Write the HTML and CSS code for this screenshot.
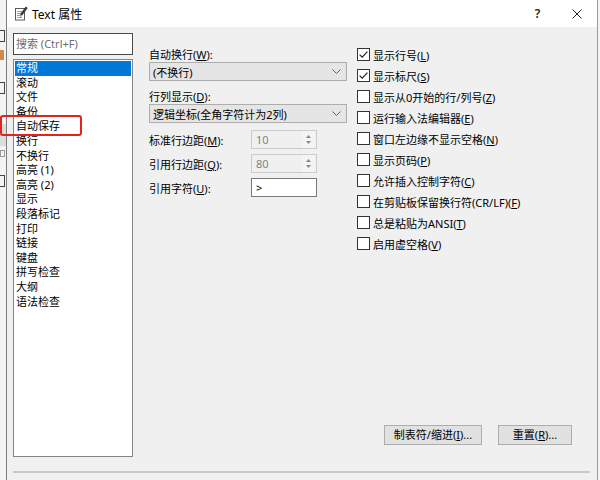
FILE: index.html
```html
<!DOCTYPE html>
<html lang="zh-CN">

<head>
    <meta charset="UTF-8">
    <title>Text 属性</title>
    <link rel="stylesheet" href="styles.css">
</head>

<body>
    <div class="desk">
        <div class="behind">
            <span class="peek g1"></span>
            <span class="peek pen"></span>
            <span class="peek g2"></span>
            <span class="peek bar"></span>
            <span class="peek tiny"></span>
            <span class="peek g3"></span>
        </div>

        <div class="window">
            <div class="titlebar">
                <svg class="app-icon" width="14" height="15" viewBox="0 0 14 15">
                    <rect x="1.5" y="2.5" width="9" height="11.5" fill="#fff" stroke="#5a5a5a"/>
                    <path d="M3 5.5h5M3 7.5h5M3 9.5h4M3 11.5h5" stroke="#9a9a9a"/>
                    <path d="M12.8 1.2 L7 9" stroke="#3a3a3a" stroke-width="2.4"/>
                    <path d="M7 9 L5.6 11 L7.9 10.1 Z" fill="#c98a3a"/>
                </svg>
                <span class="title">Text 属性</span>
                <span class="caption-btn help">?</span>
                <span class="caption-btn close">
                    <svg width="10" height="10" viewBox="0 0 10 10">
                        <path d="M0.5 0.5 L9.5 9.5 M9.5 0.5 L0.5 9.5" stroke="#222" stroke-width="1"/>
                    </svg>
                </span>
            </div>

            <div class="client">
                <div class="nav">
                    <div class="search">搜索 (Ctrl+F)</div>
                    <div class="list">
                        <div class="item selected">常规</div>
                        <div class="item">滚动</div>
                        <div class="item">文件</div>
                        <div class="item">备份</div>
                        <div class="item">自动保存</div>
                        <div class="item">换行</div>
                        <div class="item">不换行</div>
                        <div class="item">高亮 (1)</div>
                        <div class="item">高亮 (2)</div>
                        <div class="item">显示</div>
                        <div class="item">段落标记</div>
                        <div class="item">打印</div>
                        <div class="item">链接</div>
                        <div class="item">键盘</div>
                        <div class="item">拼写检查</div>
                        <div class="item">大纲</div>
                        <div class="item">语法检查</div>
                    </div>
                </div>

                <div class="page">
                    <div class="settings">
                        <div class="col-mid">
                            <div class="caption">自动换行(<u>W</u>):</div>
                            <div class="combo">
                                <span>(不换行)</span>
                                <svg width="9" height="5" viewBox="0 0 9 5"><polyline points="0.5,0.5 4.5,4.5 8.5,0.5" fill="none" stroke="#606060"/></svg>
                            </div>
                            <div class="caption second">行列显示(<u>D</u>):</div>
                            <div class="combo">
                                <span>逻辑坐标(全角字符计为2列)</span>
                                <svg width="9" height="5" viewBox="0 0 9 5"><polyline points="0.5,0.5 4.5,4.5 8.5,0.5" fill="none" stroke="#606060"/></svg>
                            </div>

                            <div class="field-row first">
                                <span class="field-label">标准行边距(<u>M</u>):</span>
                                <div class="spin">
                                    <span class="spin-value">10</span>
                                    <span class="spin-arrows">
                                        <svg width="5" height="3" viewBox="0 0 5 3"><path d="M0 3 L2.5 0 L5 3 Z" fill="#8a8a8a"/></svg>
                                        <svg width="5" height="3" viewBox="0 0 5 3"><path d="M0 0 L2.5 3 L5 0 Z" fill="#8a8a8a"/></svg>
                                    </span>
                                </div>
                            </div>
                            <div class="field-row">
                                <span class="field-label">引用行边距(<u>Q</u>):</span>
                                <div class="spin">
                                    <span class="spin-value">80</span>
                                    <span class="spin-arrows">
                                        <svg width="5" height="3" viewBox="0 0 5 3"><path d="M0 3 L2.5 0 L5 3 Z" fill="#8a8a8a"/></svg>
                                        <svg width="5" height="3" viewBox="0 0 5 3"><path d="M0 0 L2.5 3 L5 0 Z" fill="#8a8a8a"/></svg>
                                    </span>
                                </div>
                            </div>
                            <div class="field-row">
                                <span class="field-label">引用字符(<u>U</u>):</span>
                                <div class="textbox">&gt;</div>
                            </div>
                        </div>

                        <div class="col-right">
                            <div class="check"><span class="box"><svg width="11" height="11" viewBox="0 0 11 11"><path d="M1.6 5.6 L4.2 8.2 L9.4 2.6" fill="none" stroke="#222" stroke-width="1.2"/></svg></span><span>显示行号(<u>L</u>)</span></div>
                            <div class="check"><span class="box"><svg width="11" height="11" viewBox="0 0 11 11"><path d="M1.6 5.6 L4.2 8.2 L9.4 2.6" fill="none" stroke="#222" stroke-width="1.2"/></svg></span><span>显示标尺(<u>S</u>)</span></div>
                            <div class="check"><span class="box"></span><span>显示从0开始的行/列号(<u>Z</u>)</span></div>
                            <div class="check"><span class="box"></span><span>运行输入法编辑器(<u>E</u>)</span></div>
                            <div class="check"><span class="box"></span><span>窗口左边缘不显示空格(<u>N</u>)</span></div>
                            <div class="check"><span class="box"></span><span>显示页码(<u>P</u>)</span></div>
                            <div class="check"><span class="box"></span><span>允许插入控制字符(<u>C</u>)</span></div>
                            <div class="check"><span class="box"></span><span>在剪贴板保留换行符(CR/LF)(<u>F</u>)</span></div>
                            <div class="check"><span class="box"></span><span>总是粘贴为ANSI(<u>T</u>)</span></div>
                            <div class="check"><span class="box"></span><span>启用虚空格(<u>V</u>)</span></div>
                        </div>
                    </div>

                    <div class="actions">
                        <button class="btn tabs">制表符/缩进(<u>I</u>)...</button>
                        <button class="btn reset">重置(<u>R</u>)...</button>
                    </div>
                </div>
            </div>

            <div class="separator"></div>
        </div>

        <!-- annotation drawn over the screenshot -->
        <div class="mark"></div>
    </div>
</body>

</html>
```

FILE: styles.css
```css
body {
    margin: 0;
    width: 600px;
    height: 480px;
    overflow: hidden;
    background-color: #f4f4f4;
    color: #000;
    font-family: "Noto Sans", "Noto Sans CJK SC", sans-serif;
    font-size: 11px;
}

u {
    text-decoration-thickness: 1px;
    text-underline-offset: 1px;
}

.desk {
    position: relative;
    display: flex;
    height: 480px;
}

/* strip of the application behind the dialog */
.behind {
    width: 6px;
    overflow: hidden;
    display: flex;
    flex-direction: column;
    background-color: #f3f3f3;
}

.peek {
    display: block;
    flex-shrink: 0;
}

.g1, .g2, .g3 {
    width: 4px;
    height: 10px;
    border: 1px solid #444;
    border-left: none;
}

.g1 { margin-top: 30px; }

.pen {
    width: 4px;
    height: 10px;
    margin-top: 8px;
    background-color: #d08a4a;
}

.g2 { margin-top: 22px; }

.bar {
    height: 22px;
    margin-top: 30px;
    background-color: #dcdcdc;
}

.tiny {
    width: 5px;
    height: 7px;
    margin-top: 4px;
    border: 1px solid #999;
    box-sizing: border-box;
}

.g3 { margin-top: 18px; }

.window {
    width: 590px;
    border-left: 1px solid #7d7d7d;
    border-right: 1px solid #9a9a9a;
    background-color: #f0f0f0;
    display: flex;
    flex-direction: column;
}

.titlebar {
    height: 27px;
    flex-shrink: 0;
    background-color: #fff;
    display: flex;
    align-items: center;
    padding-left: 7px;
}

.app-icon {
    margin-top: -1px;
}

.title {
    margin-left: 4px;
    font-size: 12px;
    flex-grow: 1;
}

.caption-btn {
    width: 39px;
    height: 27px;
    display: flex;
    align-items: center;
    justify-content: center;
}

.help {
    font-size: 12px;
    font-weight: 600;
    color: #222;
}

.close {
    width: 40px;
}

.client {
    display: flex;
    padding: 6px 0 0 6px;
}

.nav {
    width: 120px;
    display: flex;
    flex-direction: column;
    gap: 4px;
}

.search {
    height: 22px;
    box-sizing: border-box;
    border: 1px solid #4a4a4a;
    background-color: #fff;
    color: #6d6d6d;
    padding-left: 2px;
    line-height: 20px;
}

.list {
    height: 398px;
    box-sizing: border-box;
    border: 1px solid #858585;
    background-color: #fff;
    padding: 1px;
}

.item {
    height: 14.6px;
    line-height: 14.6px;
    padding-left: 1px;
    white-space: nowrap;
}

.item.selected {
    background-color: #0078d7;
    color: #fff;
}

.page {
    flex-grow: 1;
    display: flex;
    flex-direction: column;
    margin-left: 16px;
    padding-top: 11px;
}

.settings {
    display: flex;
    gap: 10px;
}

.col-mid {
    width: 198px;
    padding-top: 3px;
    display: flex;
    flex-direction: column;
}

.caption {
    line-height: 15px;
}

.caption.second {
    margin-top: 8px;
}

.combo {
    height: 19px;
    box-sizing: border-box;
    border: 1px solid #adadad;
    background-color: #e5e5e5;
    display: flex;
    align-items: center;
    justify-content: space-between;
    padding: 0 5px 0 3px;
}

.field-row {
    display: flex;
    align-items: center;
    height: 19px;
    margin-top: 5px;
}

.field-row.first {
    margin-top: 7px;
}

.field-label {
    width: 102px;
}

.spin {
    width: 66px;
    height: 19px;
    box-sizing: border-box;
    border: 1px solid #cccccc;
    background-color: #f0f0f0;
    display: flex;
    align-items: center;
}

.spin-value {
    flex-grow: 1;
    padding-left: 4px;
    color: #838383;
}

.spin-arrows {
    width: 13px;
    height: 17px;
    margin-right: 1px;
    display: flex;
    flex-direction: column;
    align-items: center;
    justify-content: center;
    gap: 3px;
    background-color: #f4f4f4;
}

.textbox {
    width: 66px;
    height: 19px;
    box-sizing: border-box;
    border: 1px solid #7a7a7a;
    background-color: #fff;
    padding-left: 4px;
    line-height: 17px;
}

.col-right {
    display: flex;
    flex-direction: column;
}

.check {
    display: flex;
    align-items: center;
    height: 21px;
    gap: 3px;
    white-space: nowrap;
}

.box {
    width: 13px;
    height: 13px;
    box-sizing: border-box;
    border: 1px solid #333;
    background-color: #fff;
    display: flex;
    align-items: center;
    justify-content: center;
}

.actions {
    margin-top: auto;
    margin-bottom: 12px;
    padding-right: 25px;
    display: flex;
    justify-content: flex-end;
    gap: 16px;
}

.btn {
    height: 20px;
    padding: 0;
    border: 1px solid #adadad;
    background-color: #e1e1e1;
    color: #000;
    font: inherit;
    line-height: 18px;
}

.btn.tabs {
    width: 98px;
}

.btn.reset {
    width: 74px;
}

.separator {
    height: 2px;
    margin: 14px 7px 0 6px;
    background-color: #c8c8c8;
}

.mark {
    position: absolute;
    left: 0;
    top: 115px;
    width: 82px;
    height: 21px;
    box-sizing: border-box;
    border: 2px solid #e0261c;
    border-radius: 3px;
}
```
